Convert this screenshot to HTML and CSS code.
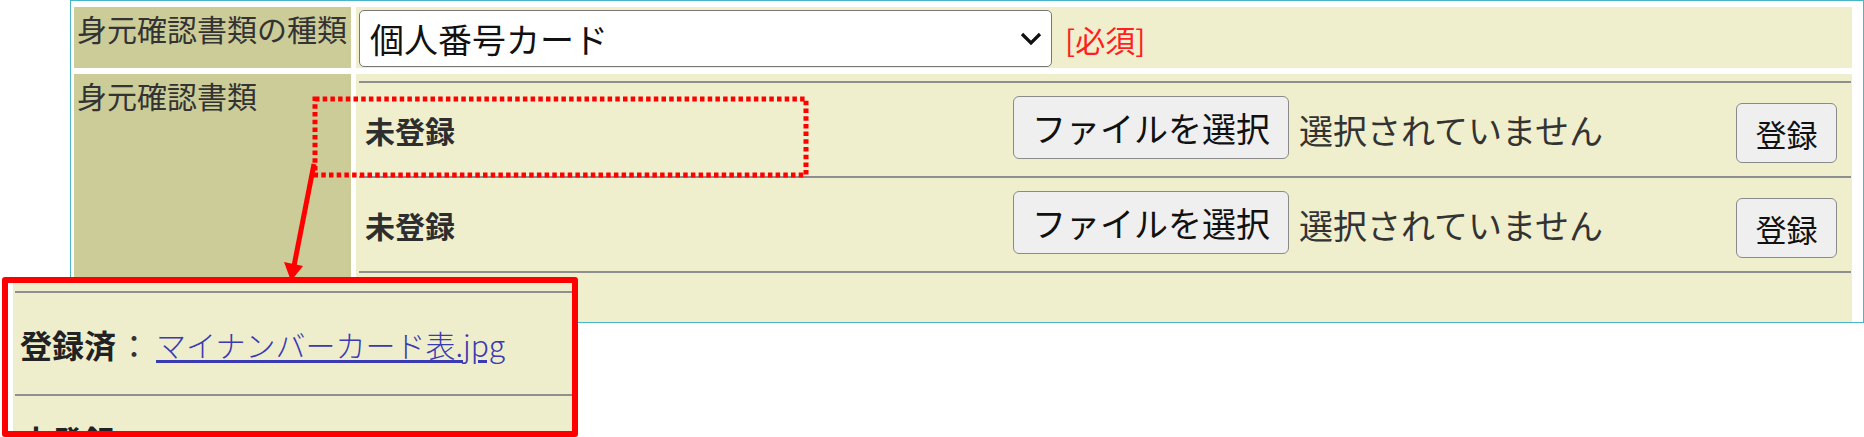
FILE: index.html
```html
<!DOCTYPE html>
<html lang="ja">
<head>
<meta charset="utf-8">
<title>身元確認書類</title>
<link rel="stylesheet" href="styles.css">
</head>
<body>
<div class="page">
  <div class="frame">
    <div class="label">身元確認書類の種類</div>
    <div class="value value-select">
      <div class="select">
        <span class="select-text">個人番号カード</span>
        <svg class="chev" width="22" height="14" viewBox="0 0 22 14"><path d="M2 2 L11 11 L20 2" fill="none" stroke="#111" stroke-width="3.2"/></svg>
      </div>
      <span class="req">[必須]</span>
    </div>
    <div class="label">身元確認書類</div>
    <div class="value value-files">
      <div class="files">
        <div class="file-row">
          <span class="status">未登録</span>
          <span class="fbtn">ファイルを選択</span>
          <span class="fname">選択されていません</span>
          <span class="reg">登録</span>
        </div>
        <div class="file-row">
          <span class="status">未登録</span>
          <span class="fbtn">ファイルを選択</span>
          <span class="fname">選択されていません</span>
          <span class="reg">登録</span>
        </div>
      </div>
    </div>
  </div>

  <div class="callout">
    <div class="snip">
      <div class="snip-row">
        <span class="done">登録済</span><span class="colon">：</span><a class="flink" href="#">マイナンバーカード表.jpg</a>
      </div>
      <div class="snip-next">未登録</div>
    </div>
  </div>

  <svg class="annot" width="1864" height="437" viewBox="0 0 1864 437">
    <rect x="315" y="99" width="491" height="76" fill="none" stroke="#ff0000" stroke-width="5" stroke-dasharray="4.5 3.2"/>
    <line x1="314" y1="164" x2="294" y2="266" stroke="#ff0000" stroke-width="5"/>
    <polygon points="291,281 284,262 303,266" fill="#ff0000"/>
  </svg>
</div>
</body>
</html>
```

FILE: styles.css
```css
body {
  margin: 0;
  background: #ffffff;
  font-family: "Noto Sans CJK JP", "Noto Sans", sans-serif;
  color: #333333;
}

.page {
  position: relative;
  width: 1864px;
  height: 437px;
  overflow: hidden;
}

.frame {
  margin-left: 70px;
  width: 1794px;
  box-sizing: border-box;
  border: 1px solid #48b6c8;
  padding: 6px 11px 0 3px;
  display: grid;
  grid-template-columns: 277px 1496px;
  grid-template-rows: 61px 248px;
  gap: 6px 5px;
  background: #ffffff;
}

.label {
  background: #cccc99;
  color: #333333;
  font-size: 30px;
  line-height: 1.45;
  padding-left: 3px;
  white-space: nowrap;
}

.value {
  background: #efeecd;
}

.value-select {
  display: flex;
  align-items: center;
  padding: 2px 0 0 3px;
}

.select {
  width: 693px;
  height: 57px;
  box-sizing: border-box;
  border: 1px solid #777777;
  border-radius: 5px;
  background: #ffffff;
  display: flex;
  align-items: center;
  justify-content: space-between;
  padding: 0 9px 0 10px;
  font-size: 34px;
  color: #111111;
}

.chev {
  display: block;
}

.req {
  margin-left: 13px;
  font-size: 30px;
  color: #ff1f1f;
}

.value-files {
  padding: 7px 1px 0 3px;
}

.files {
  border-top: 2px solid #8f8f8f;
}

.file-row {
  height: 93px;
  border-bottom: 2px solid #8f8f8f;
  display: flex;
  align-items: center;
}

.status {
  width: 648px;
  padding-left: 6px;
  font-size: 30px;
  font-weight: 700;
  color: #2e2e2e;
}

.fbtn {
  width: 276px;
  height: 63px;
  box-sizing: border-box;
  border: 1px solid #8a8a8a;
  border-radius: 6px;
  background: #efefef;
  display: flex;
  align-items: center;
  justify-content: center;
  font-size: 34px;
  color: #111111;
  margin-bottom: 4px;
}

.fname {
  margin-left: 10px;
  font-size: 34px;
  color: #333333;
}

.reg {
  margin-left: auto;
  margin-right: 14px;
  margin-top: 7px;
  width: 101px;
  height: 60px;
  box-sizing: border-box;
  border: 1px solid #8a8a8a;
  border-radius: 6px;
  background: #efefef;
  display: flex;
  align-items: center;
  justify-content: center;
  font-size: 31px;
  color: #111111;
}

.callout {
  position: absolute;
  left: 2px;
  top: 277px;
  width: 576px;
  height: 160px;
  box-sizing: border-box;
  border: 6px solid #ff0000;
  border-radius: 3px;
  background: #ffffff;
  padding-left: 5px;
  overflow: hidden;
}

.snip {
  height: 100%;
  background: #eeeecc;
  padding: 8px 0 0 2px;
  box-sizing: border-box;
}

.snip-row {
  height: 101px;
  border-top: 2px solid #8f8f8f;
  border-bottom: 2px solid #8f8f8f;
  display: flex;
  align-items: center;
  padding-left: 5px;
}

.done {
  font-size: 32px;
  font-weight: 700;
  color: #222222;
}

.colon {
  font-size: 32px;
  color: #333333;
  margin-left: 2px;
}

.flink {
  margin-left: 6px;
  font-size: 30px;
  font-weight: 300;
  color: #3a3ab2;
  text-decoration: underline;
  text-underline-offset: 3px;
}

.snip-next {
  padding: 21px 0 0 5px;
  font-size: 32px;
  font-weight: 700;
  color: #222222;
}

.annot {
  position: absolute;
  left: 0;
  top: 0;
  pointer-events: none;
}
```
